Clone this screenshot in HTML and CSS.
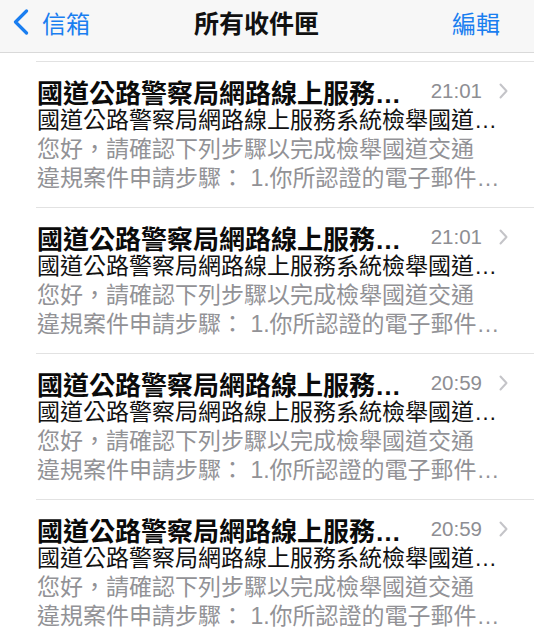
FILE: index.html
```html
<!DOCTYPE html>
<html lang="zh-Hant">

<head>
    <meta charset="UTF-8">
    <meta name="viewport" content="width=device-width, initial-scale=1.0">
    <title>所有收件匣</title>
    <link rel="stylesheet" href="styles.css">
</head>

<body>
    <header class="navBar">
        <a class="back" href="#">
            <svg width="16" height="26" viewBox="0 0 16 26">
                <polyline points="13.5,2 2.5,13 13.5,24" fill="none" stroke="#1a7ef0" stroke-width="3.2" stroke-linecap="round" stroke-linejoin="round"/>
            </svg>
            <span>信箱</span>
        </a>
        <h1 class="navTitle">所有收件匣</h1>
        <a class="edit" href="#">編輯</a>
    </header>

    <ul class="mailList">
        <li class="mail">
            <div class="mailTop">
                <span class="sender">國道公路警察局網路線上服務…</span>
                <span class="time">21:01</span>
                <svg class="chevron" width="9" height="16" viewBox="0 0 9 16">
                    <polyline points="1.5,1.5 7.5,8 1.5,14.5" fill="none" stroke="#c4c4c8" stroke-width="2" stroke-linecap="round" stroke-linejoin="round"/>
                </svg>
            </div>
            <p class="subject">國道公路警察局網路線上服務系統檢舉國道…</p>
            <p class="preview">您好，請確認下列步驟以完成檢舉國道交通</p>
            <p class="preview">違規案件申請步驟： 1.你所認證的電子郵件…</p>
        </li>
        <li class="mail">
            <div class="mailTop">
                <span class="sender">國道公路警察局網路線上服務…</span>
                <span class="time">21:01</span>
                <svg class="chevron" width="9" height="16" viewBox="0 0 9 16">
                    <polyline points="1.5,1.5 7.5,8 1.5,14.5" fill="none" stroke="#c4c4c8" stroke-width="2" stroke-linecap="round" stroke-linejoin="round"/>
                </svg>
            </div>
            <p class="subject">國道公路警察局網路線上服務系統檢舉國道…</p>
            <p class="preview">您好，請確認下列步驟以完成檢舉國道交通</p>
            <p class="preview">違規案件申請步驟： 1.你所認證的電子郵件…</p>
        </li>
        <li class="mail">
            <div class="mailTop">
                <span class="sender">國道公路警察局網路線上服務…</span>
                <span class="time">20:59</span>
                <svg class="chevron" width="9" height="16" viewBox="0 0 9 16">
                    <polyline points="1.5,1.5 7.5,8 1.5,14.5" fill="none" stroke="#c4c4c8" stroke-width="2" stroke-linecap="round" stroke-linejoin="round"/>
                </svg>
            </div>
            <p class="subject">國道公路警察局網路線上服務系統檢舉國道…</p>
            <p class="preview">您好，請確認下列步驟以完成檢舉國道交通</p>
            <p class="preview">違規案件申請步驟： 1.你所認證的電子郵件…</p>
        </li>
        <li class="mail">
            <div class="mailTop">
                <span class="sender">國道公路警察局網路線上服務…</span>
                <span class="time">20:59</span>
                <svg class="chevron" width="9" height="16" viewBox="0 0 9 16">
                    <polyline points="1.5,1.5 7.5,8 1.5,14.5" fill="none" stroke="#c4c4c8" stroke-width="2" stroke-linecap="round" stroke-linejoin="round"/>
                </svg>
            </div>
            <p class="subject">國道公路警察局網路線上服務系統檢舉國道…</p>
            <p class="preview">您好，請確認下列步驟以完成檢舉國道交通</p>
            <p class="preview">違規案件申請步驟： 1.你所認證的電子郵件…</p>
        </li>
    </ul>
</body>

</html>
```

FILE: styles.css
```css
body {
    margin: 0;
    background-color: #fff;
    font-family: "Liberation Sans", "Noto Sans CJK TC", sans-serif;
    overflow: hidden;
}

.navBar {
    display: grid;
    grid-template-columns: 1fr auto 1fr;
    align-items: center;
    height: 44px;
    padding: 0 34px 8px 13px;
    background-color: #f7f7f7;
    border-bottom: 1px solid #d9d9d9;
}

.navBar a {
    color: #1a7ef0;
    text-decoration: none;
    font-size: 24px;
}

.back {
    display: flex;
    align-items: center;
    gap: 13px;
}

.navTitle {
    margin: 0;
    font-size: 25px;
    font-weight: 700;
    color: #111;
}

.edit {
    justify-self: end;
}

.mailList {
    list-style: none;
    margin: 8px 0 0 36px;
    padding: 0;
}

.mail {
    border-top: 1px solid #e2e2e2;
    padding: 14px 26px 14px 1px;
}

.mailTop {
    display: flex;
    align-items: center;
    height: 30px;
}

.sender {
    flex: 1;
    font-size: 26px;
    font-weight: 700;
    color: #0b0b0b;
    white-space: nowrap;
}

.time {
    font-size: 20.5px;
    color: #8e8e93;
    margin-right: 17px;
}

.chevron {
    display: block;
}

.subject,
.preview {
    margin: 0;
    font-size: 23px;
    line-height: 29px;
    white-space: nowrap;
}

.subject {
    color: #111;
}

.preview {
    color: #929296;
}
```
